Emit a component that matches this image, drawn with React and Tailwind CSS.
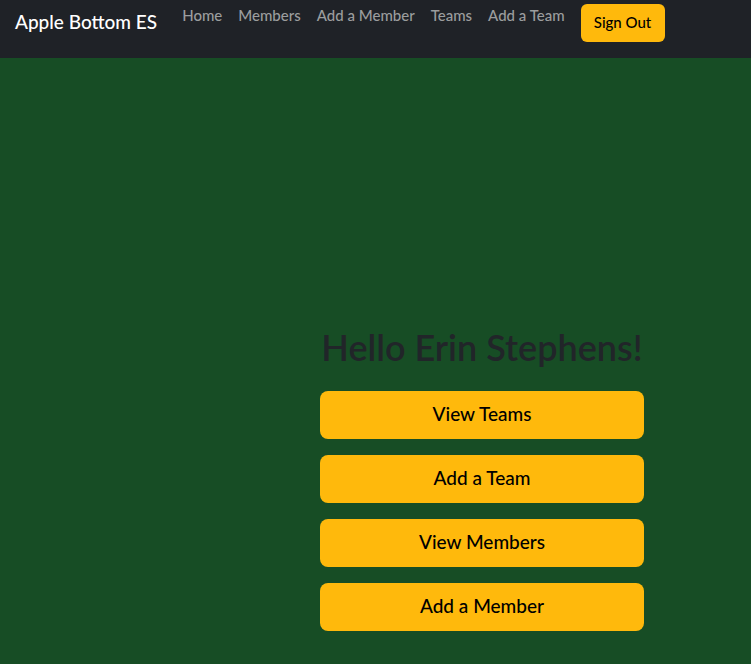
const links = ["Home", "Members", "Add a Member", "Teams", "Add a Team"];
const actions = ["View Teams", "Add a Team", "View Members", "Add a Member"];

export default function App() {
  return (
    <div className="min-h-screen bg-[#174d25] font-['Lato',sans-serif] font-medium text-[#212529]">
      <nav className="flex h-[58px] items-start bg-[#1f2227] pl-[15px]">
        <a href="#" className="mr-[25px] pt-[7px] text-[19px] leading-[30px] whitespace-nowrap text-white">
          Apple Bottom ES
        </a>
        <ul className="flex gap-4">
          {links.map((label) => (
            <li key={label}>
              <a href="#" className="block pt-[3px] text-[15px] leading-6 whitespace-nowrap text-[#9b9d9e]">
                {label}
              </a>
            </li>
          ))}
        </ul>
        <button type="button" className="mt-1 ml-4 h-[38px] w-[84px] rounded-md bg-[#ffb90c] pb-[2px] text-[15px] leading-6 whitespace-nowrap text-black">
          Sign Out
        </button>
      </nav>
      <main className="flex justify-center pt-[265px] pb-8 pl-[213px]">
        <div className="flex w-full max-w-[324px] flex-col gap-4">
          <h1 className="pb-1 text-center text-[36px] leading-[48px] font-semibold whitespace-nowrap">Hello Erin Stephens!</h1>
          {actions.map((label) => (
            <button key={label} type="button" className="h-12 w-full rounded-lg bg-[#ffb90c] pb-[2px] text-[19px] leading-[30px] text-black">
              {label}
            </button>
          ))}
        </div>
      </main>
    </div>
  );
}
